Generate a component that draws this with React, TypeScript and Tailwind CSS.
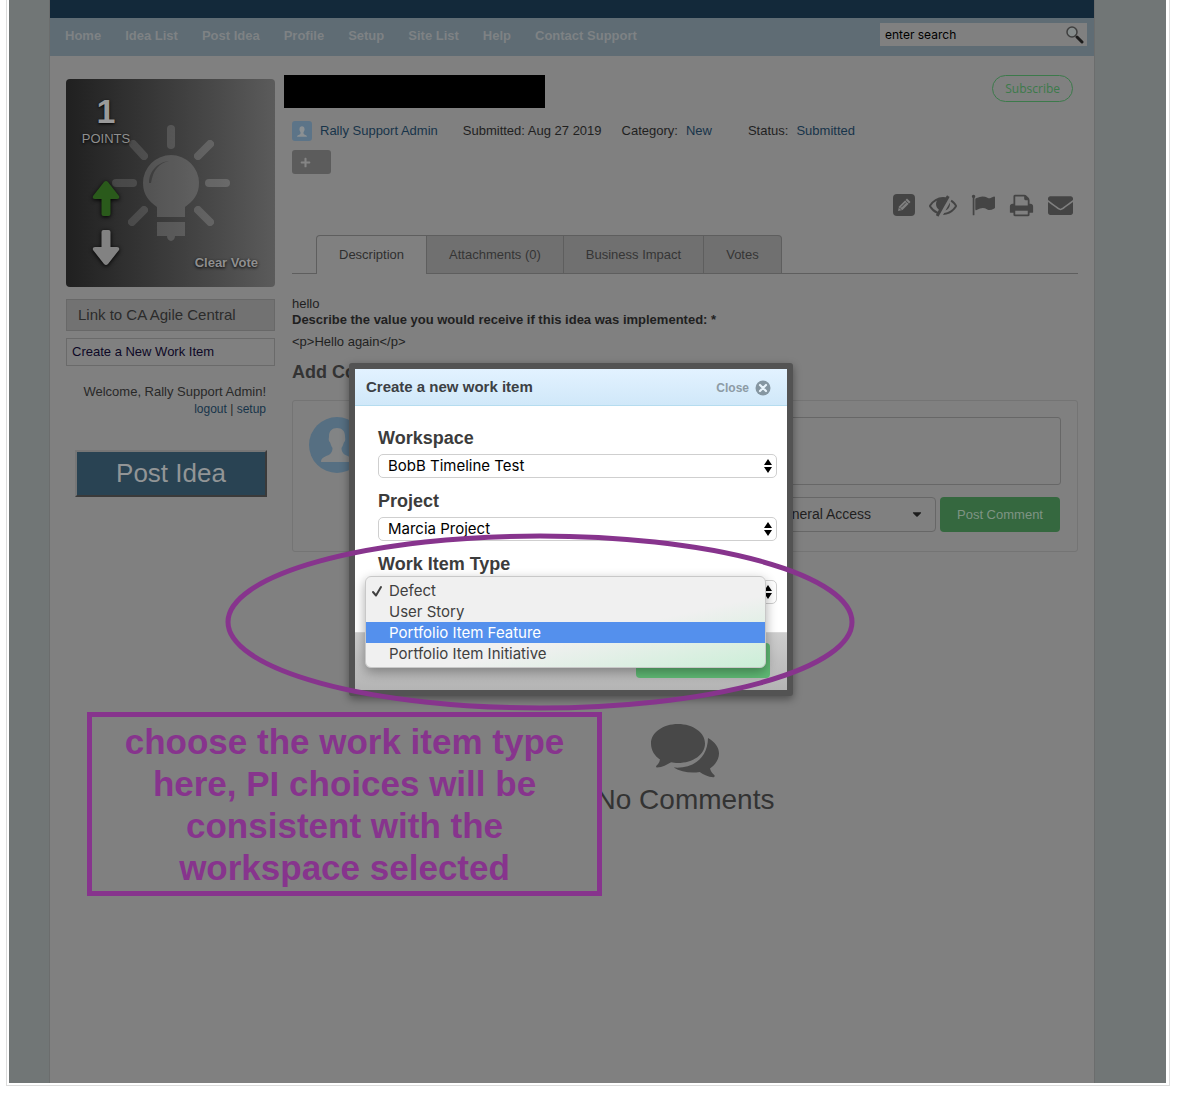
import React from "react";
import {FaEnvelope, FaPlus, FaCaretDown} from "react-icons/fa";

const navItems = ["Home", "Idea List", "Post Idea", "Profile", "Setup", "Site List", "Help", "Contact Support"];
const tabs = ["Description", "Attachments (0)", "Business Impact", "Votes"];
const workItemTypes = ["Defect", "User Story", "Portfolio Item Feature", "Portfolio Item Initiative"];

const PencilSquare = () => (
    <svg viewBox="0 0 22 22" className="w-[22px] h-[22px]">
        <rect width="22" height="22" rx="4" fill="currentColor"/>
        <path d="M5 17l1-4.500 8-8 3.500 3.500-8 8z" fill="#808080"/>
        <path d="M12.200 6l3.600 3.600M8 13.500l5-5M6.300 13.800l2 2" stroke="#444" strokeWidth="1"/>
    </svg>
)

const EyeSlash = () => (
    <svg viewBox="0 0 1792 1792" className="w-7 h-7" fill="currentColor">
        <path d="M555 1335l78-141q-87-63-136-159t-49-203q0-121 61-225-229 117-381 353 167 258 427 375zm389-759q0-20-14-34t-34-14q-125 0-214.5 89.5t-89.5 214.5q0 20 14 34t34 14 34-14 14-34q0-86 61-147t147-61q20 0 34-14t14-34zm363-191q0 7-1 9-106 189-316 567t-315 566l-49 89q-10 16-28 16-12 0-134-70-16-10-16-28 0-12 44-87-143-65-263.5-173t-208.5-245q-20-31-20-69t20-69q153-235 380-371t496-136q89 0 180 17l54-97q10-16 28-16 5 0 18 6t31 15.5 33 18.5 31.5 18.5 19.5 11.5q16 10 16 27zm37 447q0 139-79 253.5t-209 164.5l280-502q8 45 8 84zm448 128q0 35-20 69-39 64-109 145-150 172-347.5 267t-419.5 95l74-132q212-18 392.5-137t301.5-307q-115-179-282-294l63-112q95 64 182.5 153t144.5 184q20 34 20 69z"/>
        <path d="M555 830a340 340 0 0 1 500-300l-380 680q-120-140-120-380z"/>
    </svg>
)

const Flag = () => (
    <svg viewBox="0 0 1792 1792" className="w-6 h-6" fill="currentColor">
        <path d="M320 256q0 72-64 110v1266q0 13-9.5 22.5t-22.5 9.5h-64q-13 0-22.5-9.5t-9.5-22.5v-1266q-64-38-64-110 0-53 37.5-90.5t90.5-37.5 90.5 37.5 37.5 90.5zm1472 64v763q0 25-12.5 38.5t-39.5 27.5q-215 116-369 116-61 0-123.5-22t-108.5-48-115.5-48-142.5-22q-192 0-464 146-17 9-33 9-26 0-45-19t-19-45v-742q0-32 31-55 21-14 79-43 236-120 421-120 107 0 200 29t219 88q38 19 88 19 54 0 117.5-21t110-47 88-47 54.5-21q26 0 45 19t19 45z"/>
    </svg>
)

const Printer = () => (
    <svg viewBox="0 0 1792 1792" className="w-[25px] h-[25px]" fill="currentColor">
        <path d="M448 1536h896v-256h-896v256zm0-640h896v-384h-160q-40 0-68-28t-28-68v-160h-640v640zm1280 64v416q0 13-9.5 22.5t-22.5 9.5h-224v160q0 40-28 68t-68 28h-960q-40 0-68-28t-28-68v-160h-224q-13 0-22.5-9.5t-9.5-22.5v-416q0-79 56.5-135.5t135.5-56.5h64v-544q0-40 28-68t68-28h672q40 0 88 20t76 48l152 152q28 28 48 76t20 88v256h64q79 0 135.5 56.5t56.5 135.5z"/>
    </svg>
)

const Comments = () => (
    <svg viewBox="0 0 68 68" className="w-[68px] h-[68px] text-[#484848]" fill="currentColor">
        <path d="M27 10c15 0 27 8.500 27 19.500S42 49 27 49c-2.500 0-5-.3-7-.8-4 2.500-8.500 5-14 5.300-1 0-1.300-1-.6-1.800 2-1.800 3.200-3.700 3.600-6.200C3.500 42 0 36 0 29.500 0 18.500 12 10 27 10z"/>
        <path d="M57 24c7 4 11 9.500 11 15.500 0 6-3.500 11-9 15 .6 2.500 2 4.500 4.200 6.500 1 1 .4 2.300-1 2.300-5-.6-9.500-2.300-13.500-5.300-9 1.500-19 0-26-4.500 19 1.500 34-9 34.300-29.500z"/>
    </svg>
)

const Person = ({className}: {className: string}) => (
    <svg viewBox="0 0 32 34" className={className} fill="currentColor">
        <path d="M16 0c-5 0-8 3-8 8 0 2-.6 3.500 0 5 .8 1 1.200 1.500 1.600 3 .6 2 1.400 3 1.900 4 0 3-1 5-3 6.500C5 28.500 0 29 0 34h32c0-5-5-5.500-8.500-7.500-2-1.500-3-3.500-3-6.500.5-1 1.300-2 1.900-4 .4-1.500.8-2 1.600-3 .6-1.500 0-3 0-5 0-5-3-8-8-8z"/>
    </svg>
)

const Magnifier = () => (
    <svg viewBox="0 0 18 18" className="w-[18px] h-[18px]" fill="none">
        <path d="M11 11l5 5" stroke="#1c1c1c" strokeWidth="3" strokeLinecap="round"/>
        <circle cx="6" cy="6" r="5" fill="#858b8b" stroke="#3f3f3f" strokeWidth="1.500"/>
    </svg>
)

const Bulb = () => (
    <svg viewBox="0 0 120 122" className="w-[120px] h-[122px]" fill="#fff">
        <g stroke="#fff" strokeWidth="8" strokeLinecap="round">
            <path opacity=".13" d="M60 7v16"/>
            <path opacity=".15" d="M99 22L87 34"/>
            <path opacity=".16" d="M98 61h17"/>
            <path opacity=".15" d="M87 88l12 12"/>
            <path opacity=".12" d="M33 88L21 100"/>
            <path opacity=".12" d="M5 61h17"/>
            <path opacity=".12" d="M22 22l11 12"/>
        </g>
        <path opacity=".15" d="M60 33a28 28 0 0 0-28 28c0 12 6 18 14 24v10h28V85c8-6 14-12 14-24a28 28 0 0 0-28-28zM46 100h28v14h-10a4 5 0 0 1-8 0H46z"/>
        <path d="M38 61c0-12 9-21 20-22-10 2-16 9-18 22z" fill="#000" opacity=".25"/>
    </svg>
)

const Arrow = ({className}: {className: string}) => (
    <svg viewBox="0 0 28 37" className={className} fill="currentColor">
        <path d="M14 1Q15 1 16 2L27 16Q28 19 25 19H18.500V34Q18.500 36 16.500 36H11.500Q9.500 36 9.500 34V19H3Q0 19 1 16L12 2Q13 1 14 1Z"/>
    </svg>
)

const Stepper = () => (
    <svg viewBox="0 0 8 14" className="w-2 h-3.5 absolute right-[5px] top-[5px] pointer-events-none" fill="#000">
        <path d="M4 0l4 6H0zM4 14l4-6H0z"/>
    </svg>
)

const Tick = () => (
    <svg viewBox="0 0 12 12" className="ml-px w-3 h-3" fill="none" stroke="#404040" strokeWidth="2" strokeLinecap="round" strokeLinejoin="round">
        <path d="M2 7l3 3.500L10 2"/>
    </svg>
)

const CloseCircle = () => (
    <svg viewBox="0 0 16 16" className="w-4 h-4">
        <circle cx="8" cy="8" r="7.500" fill="#8596a1"/>
        <path d="M5 5l6 6M11 5l-6 6" stroke="#e8f3fb" strokeWidth="2.200" strokeLinecap="round"/>
    </svg>
)

const Field = ({id, label, options}: {id: string; label: string; options: string[]}) => (
    <div className="h-[63px]">
        <label htmlFor={id} className="block text-[18px] leading-6 font-bold text-[#3c3c3c]">{label}</label>
        <div className="relative mt-1">
            <select id={id} className="block w-full h-6 pb-px pl-[9px] pr-5 appearance-none rounded-[5px] border border-[#cfcfcf] bg-white text-[15px] leading-5 text-black font-[Inter,sans-serif]">
                {options.map((option) => <option key={option}>{option}</option>)}
            </select>
            <Stepper/>
        </div>
    </div>
)

const Header = () => (
    <header>
        <div className="h-[18px] bg-[#13293a]"/>
        <div className="h-[38px] bg-[#5f6c74] flex items-center justify-between pl-[15px] pr-[7px]">
            <nav className="flex gap-6 pb-0.5 text-[13px] leading-4 font-bold text-[#7e8284]">
                {navItems.map((item) => <a key={item} href="#" className="whitespace-nowrap">{item}</a>)}
            </nav>
            <div className="self-start w-[207px] h-[23px] mt-[5px] flex items-center bg-[#808080] pl-[5px] pr-[3px]">
                <input aria-label="Search" defaultValue="enter search" className="flex-1 min-w-0 pt-px text-[12px] text-black outline-none font-[Inter,sans-serif]"/>
                <button aria-label="Run search"><Magnifier/></button>
            </div>
        </div>
    </header>
)

const Sidebar = () => (
    <aside className="w-[209px] shrink-0 pt-[23px]">
        <div className="relative h-[208px] rounded bg-linear-to-r from-[#202020] to-[#5b5b5b] text-[#8f8f8f]">
            <div className="absolute left-[45px] top-[43px]"><Bulb/></div>
            <div className="relative w-20 flex flex-col items-center pt-3">
                <span className="text-[34px] leading-10 font-bold text-[#9a9a9a] [text-shadow:0_1px_3px_#000]">1</span>
                <span className="text-[13px] leading-4 [text-shadow:0_1px_3px_#000]">POINTS</span>
                <button aria-label="Vote up" className="mt-[33px]"><Arrow className="w-7 h-[37px] text-[#2a5a1b] drop-shadow-[0_1px_2px_#000]"/></button>
                <button aria-label="Vote down" className="mt-3"><Arrow className="w-7 h-[37px] rotate-180 text-[#828282] drop-shadow-[0_-1px_2px_#000]"/></button>
            </div>
            <button className="absolute right-[17px] bottom-4 text-[13px] leading-4 font-bold [text-shadow:0_1px_3px_#000]">Clear Vote</button>
        </div>
        <h2 className="mt-3 h-8 flex items-center pl-[11px] border border-[#686868] bg-[#727272] text-[15px] text-[#2b2b2b]">Link to CA Agile Central</h2>
        <a href="#" className="mt-[7px] h-7 flex items-center pl-[5px] border border-[#6a6a6a] text-[13px] text-[#0d0826]">Create a New Work Item</a>
        <div className="mt-[18px] pr-[9px] text-right text-[#282828]">
            <p className="text-[13px] leading-4">Welcome, Rally Support Admin!</p>
            <p className="mt-px text-[12px] leading-4"><a href="#" className="text-[#17344a]">logout</a> | <a href="#" className="text-[#17344a]">setup</a></p>
        </div>
        <button className="ml-[9px] mt-[33px] w-[192px] h-[47px] pb-0.5 border-2 border-[#767676] border-r-[#3a3a3a] border-b-[#3a3a3a] bg-[#294353] text-[26px] leading-8 text-[#929596]">Post Idea</button>
    </aside>
)

const Meta = () => (
    <div className="mt-[13px] h-5 flex items-center text-[13px] text-[#1f1f1f] whitespace-nowrap">
        <span className="w-5 h-5 rounded-[3px] bg-[#5c7488] flex items-center justify-center">
            <Person className="w-[10px] h-[11px] text-[#8b9093]"/>
        </span>
        <a href="#" className="ml-2 text-[#17344a]">Rally Support Admin</a>
        <span className="ml-[25px]">Submitted: Aug 27 2019</span>
        <span className="ml-5">Category:</span>
        <a href="#" className="ml-2 text-[#17344a]">New</a>
        <span className="ml-9">Status:</span>
        <a href="#" className="ml-2 text-[#17344a]">Submitted</a>
    </div>
)

const CommentForm = () => (
    <form className="mt-4 h-[152px] flex border border-[#747474] rounded-[3px] px-4 pt-4">
        <span className="w-14 h-14 shrink-0 rounded-full bg-[#566f82] flex items-center justify-center">
            <Person className="w-8 h-[34px] text-[#828485]"/>
        </span>
        <div className="flex-1 ml-4">
            <textarea aria-label="Comment" className="block w-full h-[68px] resize-none border border-[#676767] rounded-[3px]"/>
            <div className="mt-3 flex justify-end gap-1 pr-px">
                <div className="relative">
                    <select aria-label="Access" className="w-[176px] h-[35px] pl-3 appearance-none border border-[#676767] rounded text-[14px] text-[#1f1f1f]">
                        <option>General Access</option>
                    </select>
                    <FaCaretDown className="absolute right-3 top-2.5 w-3.5 h-3.5 text-[#1c1c1c] pointer-events-none"/>
                </div>
                <button type="button" className="w-[120px] h-[35px] rounded bg-[#35683f] text-[13px] text-[#7f9484]">Post Comment</button>
            </div>
        </div>
    </form>
)

const Idea = () => (
    <main className="flex-1 min-w-0 pt-[19px] pr-4 pl-[17px] text-[13px] text-[#1f1f1f]">
        <div className="flex justify-between pr-[5px] -ml-2">
            <div className="w-[261px] h-[33px] bg-black"/>
            <button className="h-[27px] px-3 rounded-full border border-[#3c7a4b] text-[12px] text-[#3c7a4b] font-[Open_Sans,sans-serif] font-medium">Subscribe</button>
        </div>
        <Meta/>
        <button aria-label="Add tag" className="mt-[9px] w-[39px] h-6 pl-2 rounded-[3px] bg-[#5c5c5c] flex items-center text-[#858585]"><FaPlus className="w-[11px] h-[11px]"/></button>
        <div className="mt-[19px] h-6 flex items-center justify-end gap-[14px] pr-[5px] text-[#444]">
            <button aria-label="Edit"><PencilSquare/></button>
            <button aria-label="Hide"><EyeSlash/></button>
            <button aria-label="Flag"><Flag/></button>
            <button aria-label="Print"><Printer/></button>
            <button aria-label="Email"><FaEnvelope className="w-[25px] h-[25px]"/></button>
        </div>
        <div className="mt-[18px] h-[39px] flex text-[#2f2f2f]">
            <div className="w-6 border-b border-[#5e5e5e]"/>
            {tabs.map((tab, i) => (
                <button key={tab} className={i === 0
                    ? "px-[22px] border border-b-0 border-[#5e5e5e] rounded-tl"
                    : "px-[22px] border border-l-0 border-[#5e5e5e] bg-[#707070] text-[#353535] whitespace-nowrap last-of-type:rounded-tr"}>{tab}</button>
            ))}
            <div className="flex-1 border-b border-[#5e5e5e]"/>
        </div>
        <p className="mt-[22px] leading-4">hello</p>
        <p className="leading-4 font-bold">Describe the value you would receive if this idea was implemented: *</p>
        <p className="mt-[6px] leading-4">&lt;p&gt;Hello again&lt;/p&gt;</p>
        <h2 className="mt-[10px] text-[18px] leading-6 font-bold text-[#333]">Add Comment</h2>
        <CommentForm/>
        <div className="mt-[162px] flex flex-col items-center">
            <Comments/>
            <p className="text-[28px] leading-9 text-[#333]">No Comments</p>
        </div>
    </main>
)

const WorkItemDialog = () => (
    <div role="dialog" aria-labelledby="dialog-title" className="absolute left-[340px] top-[363px] w-[444px] border-[6px] border-[#535353] rounded-[3px] bg-white shadow-[0_3px_8px_#0006]">
        <div className="h-[37px] flex items-center justify-between pl-[11px] pr-4 pt-px border-b border-[#b5dcef] bg-linear-to-b from-[#e2f2ff] to-[#d0e8f9]">
            <h2 id="dialog-title" className="text-[15px] font-bold text-[#3c4044]">Create a new work item</h2>
            <button className="flex items-center gap-1.5 text-[12px] font-bold text-[#8d9ba5]">Close <CloseCircle/></button>
        </div>
        <div className="h-[226px] pt-5 pl-[23px] pr-[10px]">
            <Field id="workspace" label="Workspace" options={["BobB Timeline Test"]}/>
            <Field id="project" label="Project" options={["Marcia Project"]}/>
            <Field id="type" label="Work Item Type" options={workItemTypes}/>
        </div>
        <div className="h-[58px] pt-[10px] pr-[17px] flex justify-end items-start border-t border-[#d8d8d8] bg-linear-to-b from-[#cdcdcd] to-[#b4b4b4]">
            <button aria-label="Create" className="w-[134px] h-[35px] rounded bg-[#5fb974]"/>
        </div>
        <div role="listbox" aria-label="Work Item Type" className="absolute left-[10px] top-[207px] w-[401px] py-[3px] rounded-md border border-[#c8c8c8] bg-linear-to-br from-[#f0f0f0] from-60% to-[#cbeed7] shadow-[0_4px_12px_#0005] text-[15px] leading-5 text-[#404040] font-[Inter,sans-serif]">
            {workItemTypes.map((type, i) => (
                <button key={type} role="option" aria-selected={i === 2} className={i === 2
                    ? "w-full h-[21px] pl-1 flex items-center bg-[#5490ed] text-white"
                    : "w-full h-[21px] pl-1 flex items-center"}>
                    <span className="w-[19px]">{i === 0 && <Tick/>}</span>
                    {type}
                </button>
            ))}
        </div>
    </div>
)

const Annotations = () => (
    <>
        <svg viewBox="0 0 630 180" className="absolute left-[216px] top-[532px] w-[630px] h-[180px] pointer-events-none" fill="none">
            <ellipse cx="315" cy="90" rx="312" ry="86" stroke="#87348d" strokeWidth="5"/>
        </svg>
        <p className="absolute left-[78px] top-[712px] w-[515px] px-8 pt-1 pb-0.5 border-[5px] border-[#87348d] text-center text-[35px] leading-[42px] font-bold text-[#87348d]">
            choose the work item type<br/>here, PI choices will be<br/>consistent with the<br/>workspace selected
        </p>
    </>
)

const App = () => {
    return (
        <div className="bg-white pb-[14px] font-[Liberation_Sans,Arial,sans-serif]">
            <div className="ml-1.5 mr-[27px] pl-0.5 pr-[3px] pb-0.5 border border-t-0 border-[#dcdcdc]">
                <div className="relative bg-[#717676] pl-10 pr-[71px]">
                    <div className="min-h-[1083px] border-x border-[#6b6d6d] bg-[#808080]">
                        <Header/>
                        <div className="flex pl-4">
                            <Sidebar/>
                            <Idea/>
                        </div>
                    </div>
                    <WorkItemDialog/>
                    <Annotations/>
                </div>
            </div>
        </div>
    )
}

export default App;
